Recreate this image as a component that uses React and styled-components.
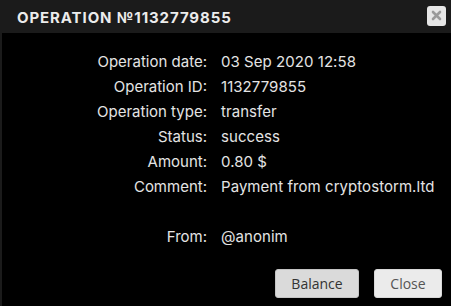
import React from "react";
import styled, { createGlobalStyle } from "styled-components";

const Global = createGlobalStyle`
  html, body { margin: 0; padding: 0; background: #000; }
  body { font-family: Inter, "Open Sans", sans-serif; }
`;

const Dialog = styled.div`
  width: 451px;
  height: 306px;
  display: flex;
  flex-direction: column;
  background: #1b1b1b;
  box-sizing: border-box;
`;

const Header = styled.div`
  height: 33px;
  flex: none;
  display: flex;
  align-items: center;
  justify-content: space-between;
  padding: 0 5px 0 17px;
  box-sizing: border-box;
`;

const Title = styled.h1`
  margin: 0;
  font-family: Inter, sans-serif;
  font-weight: 700;
  font-size: 15px;
  letter-spacing: 0.9px;
  color: #ececec;
  padding-top: 1px;
`;

const CloseX = styled.button`
  width: 19px;
  height: 20px;
  padding: 0;
  border: none;
  border-radius: 3px;
  background: #e6e6e6;
  display: flex;
  align-items: center;
  justify-content: center;
  margin-top: -2px;
`;

const Body = styled.div`
  flex: 1;
  margin-left: 2px;
  background: #000;
  display: flex;
  flex-direction: column;
  padding-top: 16px;
`;

const Grid = styled.div`
  display: grid;
  grid-template-columns: 205px 1fr;
  column-gap: 14px;
  grid-auto-rows: 25px;
  align-items: center;
`;

const Label = styled.div`
  text-align: right;
  font-size: 15px;
  color: #e4e4e4;
`;

const Value = styled.div`
  font-size: 15px;
  letter-spacing: 0.05px;
  color: #e4e4e4;
`;

const Footer = styled.div`
  display: flex;
  justify-content: flex-end;
  gap: 15px;
  padding: 0 9px 0 0;
  margin-top: auto;
  margin-bottom: 8px;
`;

const Btn = styled.button`
  width: ${(p) => p.$w}px;
  height: 29px;
  padding: 0;
  border: 1px solid ${(p) => (p.$primary ? "#c4c4c4" : "#d8d8d8")};
  border-radius: 3px;
  background: ${(p) => (p.$primary ? "#dadada" : "#ebebeb")};
  color: ${(p) => (p.$primary ? "#333" : "#555")};
  font-family: "Open Sans", sans-serif;
  font-size: 14px;
  box-sizing: border-box;
`;

const rows = [
  ["Operation date:", "03 Sep 2020 12:58"],
  ["Operation ID:", "1132779855"],
  ["Operation type:", "transfer"],
  ["Status:", "success"],
  ["Amount:", "0.80 $"],
  ["Comment:", "Payment from cryptostorm.ltd"],
  ["", ""],
  ["From:", "@anonim"],
];

export default function App() {
  return (
    <>
      <Global />
      <Dialog>
        <Header>
          <Title>OPERATION №1132779855</Title>
          <CloseX aria-label="close">
            <svg width="11" height="11" viewBox="0 0 11 11">
              <path d="M2 2 L9 9 M9 2 L2 9" stroke="#9a9a9a" strokeWidth="2.6" strokeLinecap="round" />
            </svg>
          </CloseX>
        </Header>
        <Body>
          <Grid>
            {rows.map(([l, v], i) => (
              <React.Fragment key={i}>
                <Label>{l}</Label>
                <Value>{v}</Value>
              </React.Fragment>
            ))}
          </Grid>
          <Footer>
            <Btn $primary $w={84}>Balance</Btn>
            <Btn $w={68}>Close</Btn>
          </Footer>
        </Body>
      </Dialog>
    </>
  );
}
